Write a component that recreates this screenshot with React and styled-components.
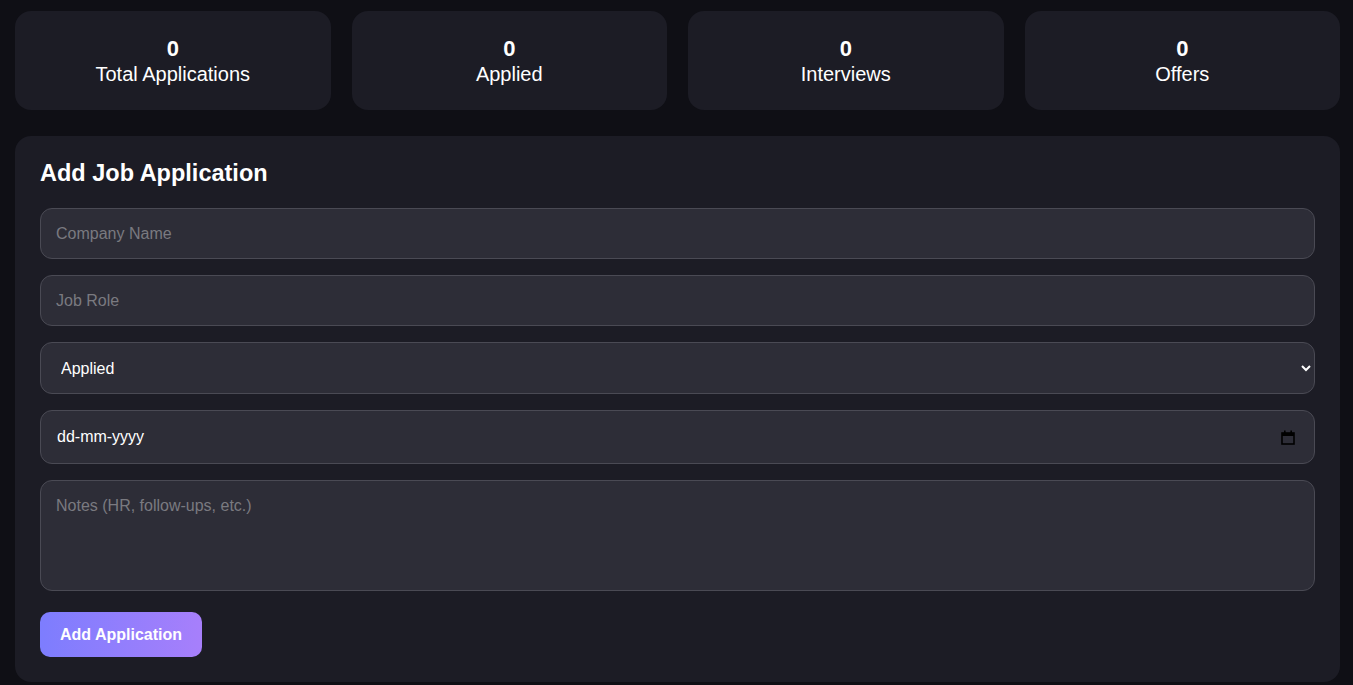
import React from 'react'
import styled, { createGlobalStyle } from 'styled-components'

const GlobalStyle = createGlobalStyle`
  html, body {
    margin: 0;
    padding: 0;
    background: #0f0f15;
    font-family: "Liberation Sans", Arial, sans-serif;
    color: #fff;
  }
  * { box-sizing: border-box; }
`

const stats = [
  { label: 'Total Applications', value: 0 },
  { label: 'Applied', value: 0 },
  { label: 'Interviews', value: 0 },
  { label: 'Offers', value: 0 },
]

function CalendarIcon() {
  return (
    <svg width="14" height="15" viewBox="0 0 14 15" fill="none">
      <rect x="1" y="3" width="12" height="11" stroke="#000" strokeWidth="1.6" />
      <rect x="1" y="3" width="12" height="3" fill="#000" />
      <rect x="3" y="0.5" width="1.6" height="3" fill="#000" />
      <rect x="9.4" y="0.5" width="1.6" height="3" fill="#000" />
    </svg>
  )
}

export default function App() {
  return (
    <Page>
      <GlobalStyle />
      <StatsRow>
        {stats.map((s) => (
          <StatCard key={s.label}>
            <StatValue>{s.value}</StatValue>
            <StatLabel>{s.label}</StatLabel>
          </StatCard>
        ))}
      </StatsRow>

      <Panel>
        <Title>Add Job Application</Title>
        <Form onSubmit={(e) => e.preventDefault()}>
          <Field placeholder="Company Name" />
          <Field placeholder="Job Role" />
          <Select defaultValue="Applied">
            <option>Applied</option>
            <option>Interview</option>
            <option>Offer</option>
            <option>Rejected</option>
          </Select>
          <DateField>
            <DateText>dd-mm-yyyy</DateText>
            <CalendarIcon />
          </DateField>
          <Notes placeholder="Notes (HR, follow-ups, etc.)" />
          <SubmitButton type="submit">Add Application</SubmitButton>
        </Form>
      </Panel>
    </Page>
  )
}

const Page = styled.div`
  padding: 11px 13px 3px 15px;
  display: flex;
  flex-direction: column;
  gap: 26px;
`

const StatsRow = styled.div`
  display: grid;
  grid-template-columns: repeat(4, 1fr);
  gap: 21px;
`

const StatCard = styled.div`
  background: #1c1c25;
  border-radius: 16px;
  padding: 25px 10px;
  height: 99px;
  display: flex;
  flex-direction: column;
  align-items: center;
`

const StatValue = styled.div`
  font-size: 22px;
  font-weight: 700;
  line-height: 1.15;
`

const StatLabel = styled.div`
  font-size: 20px;
  line-height: 1.3;
`

const Panel = styled.div`
  background: #1c1c25;
  border-radius: 16px;
  padding: 25px 25px 25px;
`

const Title = styled.h2`
  margin: 0 0 22px;
  font-size: 23.5px;
  font-weight: 700;
  line-height: 25px;
`

const Form = styled.form`
  display: flex;
  flex-direction: column;
  gap: 16px;
`

const inputBase = `
  width: 100%;
  background: #2d2d37;
  border: 1px solid #4a4a54;
  border-radius: 12px;
  color: #fff;
  font-family: "Liberation Sans", Arial, sans-serif;
  font-size: 16px;
  outline: none;
  &::placeholder { color: #7a7a80; }
`

const Field = styled.input`
  ${inputBase}
  height: 51px;
  padding: 0 15px;
`

const Select = styled.select`
  ${inputBase}
  height: 52px;
  padding: 0 12px 0 16px;
`

const DateField = styled.div`
  ${inputBase}
  height: 54px;
  padding: 0 19px 0 16px;
  display: flex;
  align-items: center;
  justify-content: space-between;
`

const DateText = styled.span`
  font-size: 16px;
  color: #fff;
`

const Notes = styled.textarea`
  ${inputBase}
  height: 111px;
  padding: 15px;
  resize: none;
  line-height: 20px;
`

const SubmitButton = styled.button`
  align-self: flex-start;
  margin-top: 5px;
  height: 45px;
  padding: 0 20px;
  border: none;
  border-radius: 10px;
  background: linear-gradient(90deg, #7d7dfe, #a77ffb);
  color: #fff;
  font-family: "Liberation Sans", Arial, sans-serif;
  font-size: 16px;
  font-weight: 700;
  cursor: pointer;
`
